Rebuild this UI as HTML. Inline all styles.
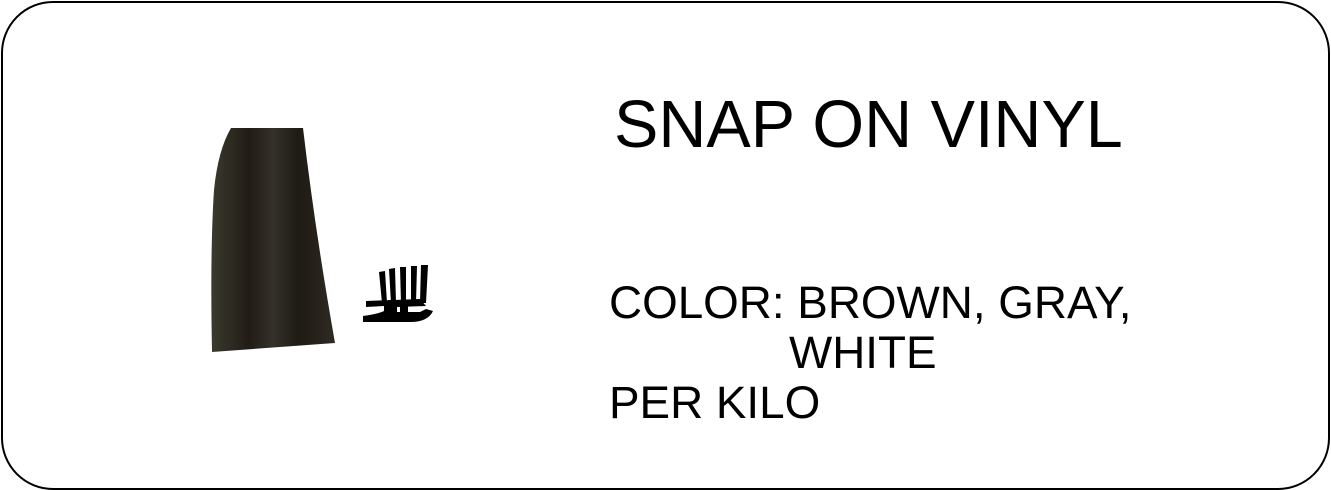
<!DOCTYPE html>
<html><head><style>
body{margin:0;background:#fff;width:1331px;height:490px;overflow:hidden;position:relative;font-family:"Liberation Sans",Arial,sans-serif;}
.box{position:absolute;left:1px;top:1px;width:1325px;height:485px;border:2px solid #000;border-radius:52px;}
.t{position:absolute;white-space:nowrap;color:#000;line-height:1;}
</style></head><body>
<div class="box"></div>
<svg width="1331" height="490" style="position:absolute;left:0;top:0">
<defs><linearGradient id="g" x1="0" x2="1">
<stop offset="0" stop-color="#3a3a2e"/><stop offset=".3" stop-color="#211d16"/><stop offset=".5" stop-color="#34302a"/><stop offset=".7" stop-color="#1e1a14"/><stop offset="1" stop-color="#2f2b22"/></linearGradient></defs>
<path d="M231,128 L303,128 Q315,230 335,343 L212,352 Q210,250 214,190 Q218,150 231,128Z" fill="url(#g)"/>
<g fill="#000">
<path d="M379,272 L385,271 L387,303 L382,303Z"/>
<path d="M389,269 L395,268 L396,303 L391,303Z"/>
<path d="M400,267 L406,267 L406,303 L401,303Z"/>
<path d="M411,266 L417,266 L416,303 L411,303Z"/>
<path d="M421,265 L428,265 L426,303 L420,303Z"/>
<path d="M366,301 L420,299 L426,306 L397,307 L397,312 L420,312 L426,309 L433,311 Q428,322 410,322 L363,322 L363,316 Q378,314 384,311 L384,306 L366,307Z"/>
<rect x="388" y="300" width="7" height="12"/>
<rect x="400" y="300" width="8" height="12"/>
</g>
</svg>
<div class="t" style="left:614px;top:92px;font-size:66.5px">SNAP ON VINYL</div>
<div class="t" style="left:609px;top:280px;font-size:45.8px">COLOR: BROWN, GRAY,</div>
<div class="t" style="left:789px;top:330px;font-size:45.8px">WHITE</div>
<div class="t" style="left:609px;top:380px;font-size:45.8px">PER KILO</div>
</body></html>
